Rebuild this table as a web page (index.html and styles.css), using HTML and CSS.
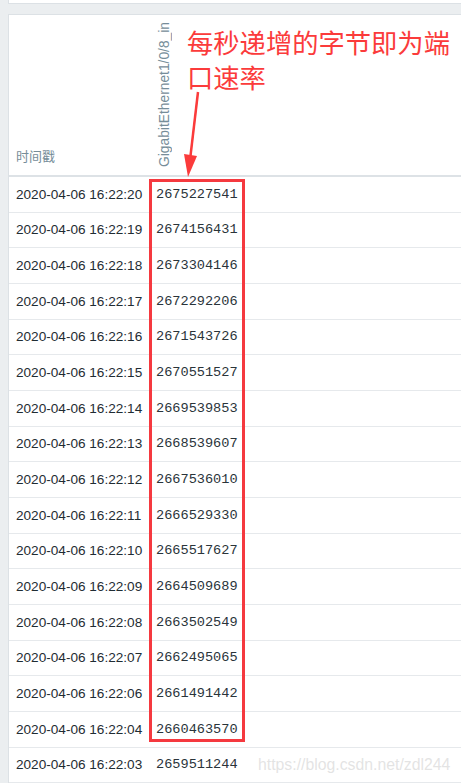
FILE: index.html
```html
<!DOCTYPE html>
<html>
<head>
<meta charset="utf-8">
<link rel="stylesheet" href="styles.css">
</head>
<body>
<div class="page">
  <div class="top-panel"></div>
  <div class="panel">
    <div class="head">
      <div class="c1 h1">时间戳</div>
      <div class="c2 h2"><span class="vtext">GigabitEthernet1/0/8_in</span></div>
    </div>
    <div class="row"><div class="c1">2020-04-06 16:22:20</div><div class="c2 num">2675227541</div></div>
    <div class="row"><div class="c1">2020-04-06 16:22:19</div><div class="c2 num">2674156431</div></div>
    <div class="row"><div class="c1">2020-04-06 16:22:18</div><div class="c2 num">2673304146</div></div>
    <div class="row"><div class="c1">2020-04-06 16:22:17</div><div class="c2 num">2672292206</div></div>
    <div class="row"><div class="c1">2020-04-06 16:22:16</div><div class="c2 num">2671543726</div></div>
    <div class="row"><div class="c1">2020-04-06 16:22:15</div><div class="c2 num">2670551527</div></div>
    <div class="row"><div class="c1">2020-04-06 16:22:14</div><div class="c2 num">2669539853</div></div>
    <div class="row"><div class="c1">2020-04-06 16:22:13</div><div class="c2 num">2668539607</div></div>
    <div class="row"><div class="c1">2020-04-06 16:22:12</div><div class="c2 num">2667536010</div></div>
    <div class="row"><div class="c1">2020-04-06 16:22:11</div><div class="c2 num">2666529330</div></div>
    <div class="row"><div class="c1">2020-04-06 16:22:10</div><div class="c2 num">2665517627</div></div>
    <div class="row"><div class="c1">2020-04-06 16:22:09</div><div class="c2 num">2664509689</div></div>
    <div class="row"><div class="c1">2020-04-06 16:22:08</div><div class="c2 num">2663502549</div></div>
    <div class="row"><div class="c1">2020-04-06 16:22:07</div><div class="c2 num">2662495065</div></div>
    <div class="row"><div class="c1">2020-04-06 16:22:06</div><div class="c2 num">2661491442</div></div>
    <div class="row"><div class="c1">2020-04-06 16:22:04</div><div class="c2 num">2660463570</div></div>
    <div class="row"><div class="c1">2020-04-06 16:22:03</div><div class="c2 num">2659511244</div></div>
  </div>
</div>
<div class="note">每秒递增的字节即为端口速率</div>
<svg class="arrow" width="30" height="100" viewBox="0 0 30 100">
  <path d="M17 2 L9 70" stroke="#fb3b3b" stroke-width="2.5" fill="none"/>
  <path d="M3 64 L16 66 L7 87 Z" fill="#fb3b3b"/>
</svg>
<div class="redbox"></div>
<div class="watermark">https://blog.csdn.net/zdl244</div>
</body>
</html>
```
FILE: styles.css
```css
html, body {
  margin: 0;
  padding: 0;
  background: #ebeef0;
  font-family: "Liberation Sans", Arial, sans-serif;
  overflow: hidden;
}
.page {
  padding-left: 8px;
  height: 783px;
  overflow: hidden;
}
.top-panel {
  height: 3px;
  background: #fff;
  border-left: 1px solid #dce1e5;
  border-bottom: 1px solid #dce1e5;
  margin-bottom: 10px;
}
.panel {
  background: #fff;
  border: 1px solid #dce1e5;
  border-right: none;
  border-bottom: none;
}
.head {
  display: flex;
  align-items: flex-end;
  height: 160px;
  border-bottom: 2px solid #dde2e6;
}
.c1 {
  width: 140px;
  padding-left: 7px;
  box-sizing: border-box;
  flex: none;
  white-space: nowrap;
}
.c2 {
  padding-left: 7px;
}
.h1 {
  font-size: 13px;
  line-height: 16px;
  color: #768d99;
  padding-bottom: 10px;
  font-family: "Liberation Sans", "Noto Sans CJK SC", sans-serif;
}
.h2 {
  padding-bottom: 8px;
  padding-left: 8px;
}
.vtext {
  display: block;
  writing-mode: vertical-rl;
  transform: rotate(180deg);
  font-size: 13.8px;
  line-height: 15px;
  color: #768d99;
}
.row {
  display: flex;
  align-items: center;
  height: 34.67px;
  border-bottom: 1px solid #e6e9ec;
  font-size: 13.6px;
  color: #1f2c33;
}
.num {
  font-family: "Liberation Mono", "Courier New", monospace;
  font-size: 13.6px;
  color: #2a343a;
}
.note {
  position: absolute;
  left: 187px;
  top: 24px;
  width: 275px;
  font-family: "Noto Sans CJK SC", sans-serif;
  font-size: 26.3px;
  line-height: 35px;
  color: #fb3b3b;
}
.arrow {
  position: absolute;
  left: 181px;
  top: 90px;
}
.redbox {
  position: absolute;
  left: 149px;
  top: 179px;
  width: 90px;
  height: 557px;
  border: 3px solid #f5393f;
}
.watermark {
  position: absolute;
  left: 258px;
  top: 756px;
  font-size: 15.8px;
  color: rgba(200, 200, 200, 0.5);
}
```
